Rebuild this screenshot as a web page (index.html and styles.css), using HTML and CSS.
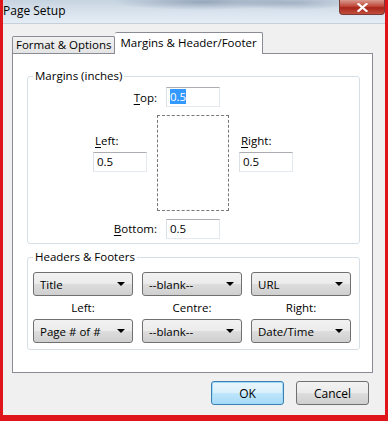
FILE: index.html
```html
<!DOCTYPE html>
<html lang="en">
<head>
  <meta charset="UTF-8">
  <title>Page Setup</title>
  <link rel="stylesheet" href="styles.css">
</head>

<body>

  <div class="window">

    <!-- Title bar -->
    <div class="titlebar">
      <div class="title">Page Setup</div>
      <div class="close-btn">
        <svg width="11" height="9" viewBox="0 0 11 9">
          <path d="M1.5 1 L9.5 8 M9.5 1 L1.5 8" stroke="#fff" stroke-width="2.2" stroke-linecap="square"/>
        </svg>
      </div>
    </div>

    <div class="client">

      <!-- Tabs -->
      <div class="tabs">
        <div class="tab">Format &amp; Options</div>
        <div class="tab active">Margins &amp; Header/Footer</div>
      </div>

      <div class="panel">

        <fieldset class="group margins-group">
          <legend>Margins (inches)</legend>
          <div class="margins-grid">
            <div class="edge-row top-row">
              <span class="field-label"><u>T</u>op:</span>
              <div class="field"><span class="selected">0.5</span></div>
            </div>

            <div class="side-block left-block">
              <span class="field-label side-label"><u>L</u>eft:</span>
              <div class="field">0.5</div>
            </div>

            <div class="page-preview"></div>

            <div class="side-block right-block">
              <span class="field-label side-label"><u>R</u>ight:</span>
              <div class="field">0.5</div>
            </div>

            <div class="edge-row bottom-row">
              <span class="field-label"><u>B</u>ottom:</span>
              <div class="field">0.5</div>
            </div>
          </div>
        </fieldset>

        <fieldset class="group hf-group">
          <legend>Headers &amp; Footers</legend>
          <div class="hf-grid">
            <div class="combo"><span>Title</span><span class="arrow"></span></div>
            <div class="combo"><span>--blank--</span><span class="arrow"></span></div>
            <div class="combo"><span>URL</span><span class="arrow"></span></div>

            <div class="hf-label">Left:</div>
            <div class="hf-label">Centre:</div>
            <div class="hf-label">Right:</div>

            <div class="combo"><span>Page # of #</span><span class="arrow"></span></div>
            <div class="combo"><span>--blank--</span><span class="arrow"></span></div>
            <div class="combo"><span>Date/Time</span><span class="arrow"></span></div>
          </div>
        </fieldset>

      </div>

      <!-- Dialog buttons -->
      <div class="buttons">
        <button class="btn default">OK</button>
        <button class="btn">Cancel</button>
      </div>

    </div>
  </div>

</body>
</html>
```

FILE: styles.css
```css
:root {
  --frame-red: #e0141b;
  --dialog-bg: #f0f0f0;
  --tab-border: #898c95;
  --group-border: #d5dfe5;
  --btn-border: #707070;
}

html, body {
  margin: 0;
  padding: 0;
  width: 388px;
  height: 421px;
  font-family: 'Open Sans', 'Noto Sans', sans-serif;
  font-size: 11.5px;
  color: #000;
  background: var(--frame-red);
}

.window {
  width: 388px;
  height: 421px;
  box-sizing: border-box;
  border-left: 3px solid var(--frame-red);
  border-right: 3px solid var(--frame-red);
  border-bottom: 6px solid var(--frame-red);
  background: var(--dialog-bg);
  display: flex;
  flex-direction: column;
  overflow: hidden;
}

/* title bar - aero glass look */
.titlebar {
  height: 24px;
  flex: none;
  box-sizing: border-box;
  display: flex;
  justify-content: space-between;
  align-items: flex-start;
  background:
    radial-gradient(ellipse 90px 8px at 200px 2px, rgba(90, 110, 140, 0.45), transparent),
    radial-gradient(ellipse 60px 7px at 290px 3px, rgba(90, 110, 140, 0.35), transparent),
    linear-gradient(#c6d3e0, #dbe5ef 60%, #e4ecf4);
  border-bottom: 1px solid #c7d0da;
}

.title {
  padding: 3px 0 0 0;
  line-height: 16px;
  font-size: 12px;
}

.close-btn {
  width: 46px;
  height: 15px;
  box-sizing: border-box;
  display: flex;
  align-items: center;
  justify-content: center;
  background: linear-gradient(#d99a8e, #c0473a 45%, #a8261b 55%, #c24e3e);
  border: 1px solid #7a3a35;
  border-top: none;
  border-radius: 0 0 4px 4px;
}

.client {
  flex: 1;
  display: flex;
  flex-direction: column;
  padding: 8px 12px 0 9px;
}

/* tabs */
.tabs {
  display: flex;
  align-items: flex-end;
  height: 21px;
  flex: none;
}

.tab {
  height: 17px;
  box-sizing: border-box;
  padding: 0 3px;
  line-height: 15px;
  border: 1px solid var(--tab-border);
  border-bottom: none;
  background: linear-gradient(#f2f2f2, #e4e4e4);
  border-radius: 2px 2px 0 0;
}

.tab.active {
  height: 22px;
  margin-bottom: -1px;
  padding: 0 5px;
  line-height: 20px;
  background: #fff;
  border-left: none;
  position: relative;
  z-index: 1;
}

.panel {
  height: 320px;
  flex: none;
  box-sizing: border-box;
  border: 1px solid var(--tab-border);
  background: #fff;
  padding: 0 12px 0 14px;
}

/* group boxes */
.group {
  margin: 0;
  padding: 0;
  border: 1px solid var(--group-border);
  border-radius: 3px;
  min-width: 0;
}

.group legend {
  margin-left: 5px;
  padding: 0 2px;
  line-height: 16px;
}

.margins-group {
  margin-top: 14px;
}

.margins-grid {
  display: grid;
  grid-template-columns: 54px 72px 53px;
  grid-template-rows: 20px 96px 20px;
  column-gap: 10px;
  row-gap: 8px;
  padding: 3px 0 4px 65px;
}

.edge-row {
  grid-column: 1 / 3;
  display: flex;
  justify-content: flex-end;
  align-items: center;
  gap: 9px;
  padding-right: 9px;
}

.top-row {
  grid-row: 1;
}

.bottom-row {
  grid-row: 3;
  margin-top: -1px;
}

.left-block {
  grid-column: 1;
  grid-row: 2;
}

.page-preview {
  grid-column: 2;
  grid-row: 2;
  box-sizing: border-box;
  border: 1px dashed #777;
}

.right-block {
  grid-column: 3;
  grid-row: 2;
}

.field-label u {
  text-decoration-thickness: 1px;
  text-underline-offset: 2px;
}

.field {
  width: 54px;
  height: 20px;
  box-sizing: border-box;
  border: 1px solid #e3e9ef;
  border-top-color: #abadb3;
  border-left-color: #dbdfe6;
  background: #fff;
  padding-left: 3px;
  line-height: 18px;
}

.field .selected {
  background: #3399ff;
  color: #fff;
}

.side-block {
  display: flex;
  flex-direction: column;
  gap: 3px;
  margin-top: 18px;
}

.side-label {
  padding-left: 2px;
  line-height: 16px;
}

.hf-group {
  margin-top: 5px;
}

.hf-grid {
  display: grid;
  grid-template-columns: repeat(3, 100px);
  column-gap: 9px;
  padding: 7px 0 6px 5px;
}

.combo {
  height: 24px;
  box-sizing: border-box;
  display: flex;
  align-items: center;
  padding: 0 7px 0 6px;
  border: 1px solid var(--btn-border);
  border-radius: 3px;
  background: linear-gradient(#f2f2f2, #ebebeb 50%, #dddddd 51%, #cfcfcf);
}

.combo .arrow {
  margin-left: auto;
  width: 0;
  height: 0;
  border-left: 4px solid transparent;
  border-right: 4px solid transparent;
  border-top: 4px solid #000;
}

.hf-label {
  height: 23px;
  line-height: 23px;
  text-align: center;
}

/* buttons */
.buttons {
  display: flex;
  justify-content: flex-end;
  gap: 12px;
  margin-top: 8px;
  margin-right: 4px;
}

.btn {
  width: 73px;
  height: 24px;
  font-family: inherit;
  font-size: 12px;
  color: #000;
  border: 1px solid var(--btn-border);
  border-radius: 3px;
  background: linear-gradient(#f2f2f2, #ebebeb 50%, #dddddd 51%, #cfcfcf);
  padding: 0;
}

.btn.default {
  border-color: #3c7fb1;
  background: linear-gradient(#eaf6fd, #d9f0fc 50%, #bee6fd 51%, #a7d9f5);
  box-shadow: inset 0 0 0 1px #9fdcf9;
}
```
